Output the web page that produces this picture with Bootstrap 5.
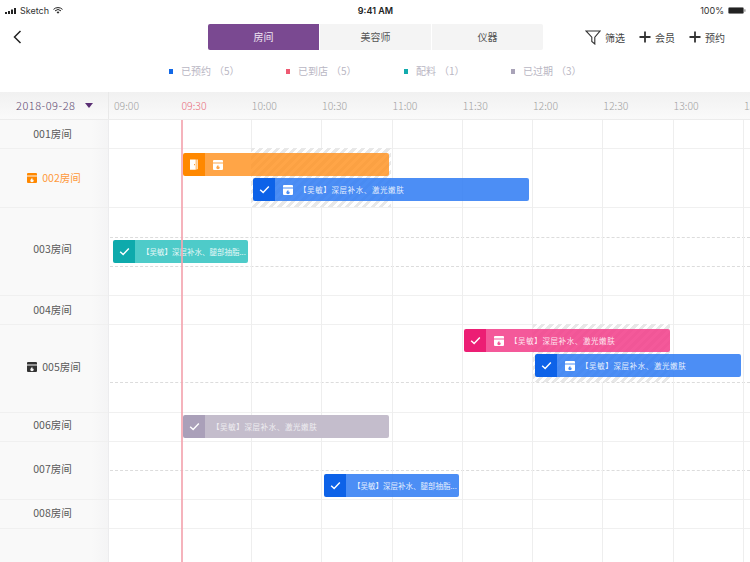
<!DOCTYPE html>
<html lang="zh">
<head>
<meta charset="utf-8">
<title>房间预约</title>
<link href="https://cdn.jsdelivr.net/npm/bootstrap@5.3.0/dist/css/bootstrap.min.css" rel="stylesheet">
<style>
html,body{width:750px;height:562px;overflow:hidden;background:#fff;}
body{font-family:"Noto Sans CJK SC","Liberation Sans",sans-serif;color:#555;font-weight:300;}
.status-bar{height:20px;padding:1px 4px 0 5px;font-family:Inter,"Liberation Sans",sans-serif;font-size:9px;color:#333;font-weight:400;}
.status-side{width:220px;}
.status-time{font-weight:600;color:#222;}
.top-bar{height:26px;margin-top:4px;}
.back-zone{width:208px;padding-left:13px;}
.seg-group{width:335px;}
.seg-btn{flex:1 1 0;height:26px;padding:0;border:0;border-radius:0;font-size:10px;line-height:26px;font-weight:400;background:#f4f4f4;color:#555;margin-right:1px;}
.seg-btn:last-child{margin-right:0;border-radius:0 2px 2px 0;}
.seg-btn.is-on,.seg-btn.is-on:hover{background:#7a4991;color:#efe6f3;border-radius:2px 0 0 2px;}
.top-tools{padding-left:42px;font-size:10px;color:#444;font-weight:400;}
.tool{width:50px;gap:4px;height:26px;}
.tool.wide{width:54px;}
.legend-strip{height:42px;padding-left:169px;font-size:10px;color:#b9b6c3;font-weight:400;}
.leg{gap:8px;flex:none;white-space:nowrap;line-height:14px;}
.leg-a{width:117px;}.leg-b{width:118px;}.leg-c{width:107px;}
.leg-dot{width:4px;height:5px;display:block;}
.leg-count{margin-left:3px;}
.head-row{height:28px;background:linear-gradient(#f1f1f1,#fafafa);border-bottom:1px solid #ececec;font-size:10.5px;color:#a3a3a3;}
.date-cell{width:109px;flex:none;padding-left:16px;color:#5f4a72;gap:10px;border-right:1px solid #e9e9e9;font-size:11px;letter-spacing:.5px;}
.date-caret{width:0;height:0;border-left:4.5px solid transparent;border-right:4.5px solid transparent;border-top:5px solid #5a2f74;}
.hour{width:70.3px;flex:none;}
.hour.first{width:72.5px;padding-left:5px;}
.hour.now{color:#e8707e;}
.sheet{height:442px;}
.rooms{width:109px;flex:none;background:linear-gradient(90deg,#f9f9f9 85%,#f4f4f5);border-right:1px solid #ececee;}
.room{border-bottom:1px solid #f0f0f0;font-size:10.5px;color:#5a5a5a;gap:5px;font-weight:400;}
.room.plain{padding-right:3px;}
.h29{height:29px;}.h59{height:59px;}.h88{height:88px;}.h58{height:58px;}
.room.busy{color:#ff9a3c;}
.pad-1{padding-bottom:1px;}.pad-2{padding-bottom:2px;}.pad-4{padding-bottom:4px;}.pad-6{padding-bottom:6px;}
.room-icon{width:10px;height:10px;flex:none;}
.room.busy .room-icon{color:#ff8800;}
.room.dark .room-icon{color:#333;}
.chart{position:relative;flex:1 1 auto;overflow:hidden;}
.lane-row{border-bottom:1px solid #f0f0f0;box-sizing:border-box;}
.lane-dash{border-bottom:1px dashed #dcdcdc;margin-left:1px;}
.lane-30{height:30px;}.lane-29{height:29px;}.lane-58{height:58px;}
.v-lines{position:absolute;inset:0;display:flex;}
.v-lines span{width:70.3px;flex:none;border-right:1px solid #eeeeee;}
.v-lines span:first-child{width:72.7px;border-right-color:transparent;}
.hatch{position:absolute;background:repeating-linear-gradient(135deg,#e8e8e8 0 3px,#fff 3px 6px);}
.evt{position:absolute;height:23px;display:flex;border-radius:2px;overflow:hidden;font-size:7.5px;letter-spacing:.6px;color:rgba(255,255,255,.88);line-height:23px;white-space:nowrap;font-weight:400;}
.evt.tight{letter-spacing:0;}
.evt-head{width:22px;flex:none;display:flex;align-items:center;justify-content:center;}
.evt-body{flex:1 1 auto;display:flex;align-items:center;min-width:0;padding-left:7px;gap:6px;}
.evt-body.icon-first{padding-left:8px;}
.evt-body svg{width:10px;height:10px;flex:none;color:#fff;}
.c-orange .evt-head{background:#ff8800;}.c-orange .evt-body{background:rgba(255,143,25,.8);}
.c-blue .evt-head{background:#0d62e8;}.c-blue .evt-body{background:rgba(45,122,243,.85);}
.c-teal .evt-head{background:#0eaaac;}.c-teal .evt-body{background:#4ecbc9;}
.c-pink .evt-head{background:#ec1e74;}.c-pink .evt-body{background:rgba(242,60,136,.85);}
.c-gray .evt-head{background:#aaa0b9;}.c-gray .evt-body{background:#c4bdcc;color:#efedf1;}
.now-line{position:absolute;left:72px;top:0;bottom:0;width:1.5px;background:#f3a6b0;opacity:.85;z-index:2;}
</style>
</head>
<body>
<svg width="0" height="0" class="position-absolute">
  <symbol id="store" viewBox="0 0 10 10"><path fill-rule="evenodd" d="M1 0h8a1 1 0 0 1 1 1v1.600H0V1a1 1 0 0 1 1-1zM0 3.400h10V9a1 1 0 0 1-1 1H1a1 1 0 0 1-1-1zM5 4.600c.2 1-1.700 1.700-1.700 3.200 0 .9.8 1.400 1.700 1.400s1.700-.5 1.700-1.400c0-.8-.5-1.200-.8-1.600-.2.4-.3.5-.5.5 0-.8 0-1.500-.4-2.100z" fill="currentColor"/></symbol>
  <symbol id="tick" viewBox="0 0 12 10"><path d="M1.200 5.200 4.500 8.300 10.800 1.800" fill="none" stroke="#fff" stroke-width="1.600"/></symbol>
  <symbol id="door" viewBox="0 0 9 12"><path fill="#fff" d="M0 .5h6.500V12H0z"/><path fill="#ffd9ad" d="M7 .5h2V11L7 12z"/><path fill="#ff8800" d="M4.600 5.500h.9v1.300h-.9z"/></symbol>
</svg>

<div class="status-bar d-flex align-items-center justify-content-between">
  <div class="status-side d-flex align-items-center gap-1">
    <svg width="11" height="6" viewBox="0 0 11 6"><path fill="#222" d="M0 4h2v2H0zM3 3h2v3H3zM6 1.500h2V6H6zM9 0h2v6H9z"/></svg>
    <span>Sketch</span>
    <svg width="10" height="7" viewBox="0 0 10 7"><path fill="none" stroke="#222" d="M.5 2.400a6.500 6.500 0 0 1 9 0M2 3.900a4.300 4.300 0 0 1 6 0"/><path fill="#222" d="M3.500 5.100a2.200 2.200 0 0 1 3 0L5 6.800z"/></svg>
  </div>
  <div class="status-time">9:41 AM</div>
  <div class="status-side d-flex align-items-center justify-content-end gap-1">
    <span>100%</span>
    <svg width="18" height="7" viewBox="0 0 18 7"><rect x=".4" y=".4" width="15.200" height="6.200" rx="1.400" fill="#222" stroke="#777" stroke-width=".6"/><rect x="16.400" y="2.300" width="1" height="2.400" fill="#777"/></svg>
  </div>
</div>

<div class="top-bar d-flex align-items-center">
  <div class="back-zone">
    <svg class="d-block" width="9" height="14" viewBox="0 0 9 14"><path d="M7.500 1 1.500 7l6 6" fill="none" stroke="#222" stroke-width="1.500"/></svg>
  </div>
  <div class="seg-group d-flex">
    <button class="btn seg-btn is-on">房间</button>
    <button class="btn seg-btn">美容师</button>
    <button class="btn seg-btn">仪器</button>
  </div>
  <div class="top-tools d-flex">
    <div class="tool wide d-flex align-items-center">
      <svg width="16" height="15" viewBox="0 0 16 15"><path d="M1 1h14L9.800 7.200V14L6.800 11.500V7.200z" fill="none" stroke="#333" stroke-width="1.100"/></svg><span>筛选</span>
    </div>
    <div class="tool d-flex align-items-center">
      <svg width="12" height="12" viewBox="0 0 12 12"><path d="M6 .5v11M.5 6h11" stroke="#333" stroke-width="1.800"/></svg><span>会员</span>
    </div>
    <div class="tool d-flex align-items-center">
      <svg width="12" height="12" viewBox="0 0 12 12"><path d="M6 .5v11M.5 6h11" stroke="#333" stroke-width="1.800"/></svg><span>预约</span>
    </div>
  </div>
</div>

<div class="legend-strip d-flex align-items-center">
  <div class="leg leg-a d-flex align-items-center"><i class="leg-dot" style="background:#1268e6"></i><span>已预约<span class="leg-count">（5）</span></span></div>
  <div class="leg leg-b d-flex align-items-center"><i class="leg-dot" style="background:#ee5a72"></i><span>已到店<span class="leg-count">（5）</span></span></div>
  <div class="leg leg-c d-flex align-items-center"><i class="leg-dot" style="background:#12abad"></i><span>配料<span class="leg-count">（1）</span></span></div>
  <div class="leg d-flex align-items-center"><i class="leg-dot" style="background:#a9a3b8"></i><span>已过期<span class="leg-count">（3）</span></span></div>
</div>

<div class="head-row d-flex align-items-center">
  <div class="date-cell d-flex align-items-center align-self-stretch"><span>2018-09-28</span><i class="date-caret"></i></div>
  <div class="hour first">09:00</div>
  <div class="hour now">09:30</div>
  <div class="hour">10:00</div>
  <div class="hour">10:30</div>
  <div class="hour">11:00</div>
  <div class="hour">11:30</div>
  <div class="hour">12:00</div>
  <div class="hour">12:30</div>
  <div class="hour">13:00</div>
  <div class="hour">13:30</div>
</div>

<div class="sheet d-flex">
  <div class="rooms">
    <div class="room plain h29 pad-1 d-flex align-items-center justify-content-center"><span>001房间</span></div>
    <div class="room busy h59 pad-1 d-flex align-items-center justify-content-center"><svg class="room-icon"><use href="#store"/></svg><span>002房间</span></div>
    <div class="room plain h88 pad-6 d-flex align-items-center justify-content-center"><span>003房间</span></div>
    <div class="room plain h29 pad-1 d-flex align-items-center justify-content-center"><span>004房间</span></div>
    <div class="room dark h88 pad-4 d-flex align-items-center justify-content-center"><svg class="room-icon"><use href="#store"/></svg><span>005房间</span></div>
    <div class="room plain h29 pad-4 d-flex align-items-center justify-content-center"><span>006房间</span></div>
    <div class="room plain h58 pad-4 d-flex align-items-center justify-content-center"><span>007房间</span></div>
    <div class="room plain h29 pad-2 d-flex align-items-center justify-content-center"><span>008房间</span></div>
  </div>
  <div class="chart">
    <div class="lane-row h29"></div>
    <div class="lane-row h59"></div>
    <div class="lane-row h88"><div class="lane-dash lane-30"></div><div class="lane-dash lane-29"></div></div>
    <div class="lane-row h29"></div>
    <div class="lane-row h88"><div class="lane-dash lane-58"></div></div>
    <div class="lane-row h29"></div>
    <div class="lane-row h58"><div class="lane-dash lane-29"></div></div>
    <div class="lane-row h29"></div>

    <div class="v-lines"><span></span><span></span><span></span><span></span><span></span><span></span><span></span><span></span><span></span></div>

    <div class="hatch" style="left:142px;top:28px;width:140px;height:59px"></div>
    <div class="hatch" style="left:424px;top:204px;width:137px;height:58px"></div>

    <div class="evt c-orange" style="left:74px;top:33px;width:206px">
      <div class="evt-head"><svg width="8" height="11"><use href="#door"/></svg></div>
      <div class="evt-body icon-first"><svg><use href="#store"/></svg></div>
    </div>
    <div class="evt c-blue" style="left:144px;top:58px;width:276px">
      <div class="evt-head"><svg width="11" height="9"><use href="#tick"/></svg></div>
      <div class="evt-body icon-first"><svg><use href="#store"/></svg><span>【吴敏】深层补水、激光嫩肤</span></div>
    </div>
    <div class="evt c-teal tight" style="left:4px;top:120px;width:135px">
      <div class="evt-head"><svg width="11" height="9"><use href="#tick"/></svg></div>
      <div class="evt-body"><span>【吴敏】深层补水、腿部抽脂...</span></div>
    </div>
    <div class="evt c-pink" style="left:355px;top:209px;width:206px">
      <div class="evt-head"><svg width="11" height="9"><use href="#tick"/></svg></div>
      <div class="evt-body icon-first"><svg><use href="#store"/></svg><span>【吴敏】深层补水、激光嫩肤</span></div>
    </div>
    <div class="evt c-blue" style="left:426px;top:234px;width:206px">
      <div class="evt-head"><svg width="11" height="9"><use href="#tick"/></svg></div>
      <div class="evt-body icon-first"><svg><use href="#store"/></svg><span>【吴敏】深层补水、激光嫩肤</span></div>
    </div>
    <div class="evt c-gray" style="left:74px;top:295px;width:206px">
      <div class="evt-head"><svg width="11" height="9"><use href="#tick"/></svg></div>
      <div class="evt-body"><span>【吴敏】深层补水、激光嫩肤</span></div>
    </div>
    <div class="evt c-blue tight" style="left:215px;top:354px;width:135px">
      <div class="evt-head"><svg width="11" height="9"><use href="#tick"/></svg></div>
      <div class="evt-body"><span>【吴敏】深层补水、腿部抽脂...</span></div>
    </div>

    <div class="now-line"></div>
  </div>
</div>
<script src="https://cdn.jsdelivr.net/npm/bootstrap@5.3.0/dist/js/bootstrap.bundle.min.js"></script>
</body>
</html>
